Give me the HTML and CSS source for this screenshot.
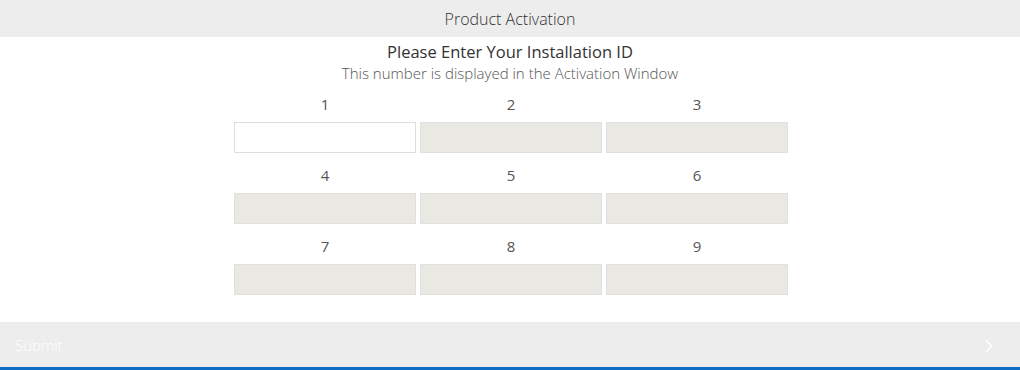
FILE: index.html
```html
<!DOCTYPE html>
<html lang="en">
<head>
    <meta charset="UTF-8">
    <meta name="viewport" content="width=device-width, initial-scale=1.0">
    <title>Product Activation</title>
    <link rel="stylesheet" href="styles.css">
</head>
<body>
    <div class="header">Product Activation</div>

    <div class="content">
        <h1>Please Enter Your Installation ID</h1>
        <p class="subtitle">This number is displayed in the Activation Window</p>

        <div class="id-grid">
            <div class="id-cell"><label>1</label><input type="text" class="id-input active"></div>
            <div class="id-cell"><label>2</label><input type="text" class="id-input" disabled></div>
            <div class="id-cell"><label>3</label><input type="text" class="id-input" disabled></div>
            <div class="id-cell"><label>4</label><input type="text" class="id-input" disabled></div>
            <div class="id-cell"><label>5</label><input type="text" class="id-input" disabled></div>
            <div class="id-cell"><label>6</label><input type="text" class="id-input" disabled></div>
            <div class="id-cell"><label>7</label><input type="text" class="id-input" disabled></div>
            <div class="id-cell"><label>8</label><input type="text" class="id-input" disabled></div>
            <div class="id-cell"><label>9</label><input type="text" class="id-input" disabled></div>
        </div>
    </div>

    <div class="footer">
        <span class="submit">Submit</span>
        <svg class="chevron" width="8" height="14" viewBox="0 0 8 14">
            <path d="M1.5 1.5 L6.5 7 L1.5 12.5" fill="none" stroke="white" stroke-width="1.6"/>
        </svg>
    </div>
</body>
</html>
```
FILE: styles.css
```css
body {
    font-family: 'Open Sans', 'Noto Sans', sans-serif;
    margin: 0;
    padding: 0;
    background-color: white;
    color: #444;
    height: 370px;
    display: flex;
    flex-direction: column;
}

.header {
    background-color: #ededed;
    height: 37px;
    line-height: 38px;
    text-align: center;
    font-size: 16px;
    font-weight: 300;
    color: #333;
}

.content {
    flex: 1;
    display: flex;
    flex-direction: column;
    align-items: center;
}

h1 {
    margin: 3px 0 0;
    font-size: 16.5px;
    font-weight: 400;
    line-height: 24px;
    color: #333;
}

.subtitle {
    margin: 0;
    font-size: 15px;
    font-weight: 300;
    line-height: 18px;
    color: #555;
}

.id-grid {
    display: grid;
    grid-template-columns: repeat(3, 182px);
    column-gap: 4px;
    row-gap: 2px;
    margin: 2px 0 0 2px;
}

.id-cell {
    display: flex;
    flex-direction: column;
    align-items: center;
}

.id-cell label {
    font-size: 15px;
    line-height: 36px;
    padding-top: 2px;
    color: #555;
}

.id-input {
    box-sizing: border-box;
    width: 182px;
    height: 31px;
    margin: 0;
    border: 1px solid #e0e0dc;
    background-color: #e9e8e2;
}

.id-input.active {
    background-color: white;
    border-color: #dedede;
}

.footer {
    height: 45px;
    border-bottom: 3px solid #0a6cc2;
    background-color: #ededed;
    display: flex;
    justify-content: space-between;
    align-items: center;
    padding: 0 27px 0 15px;
    color: white;
}

.submit {
    font-size: 15px;
    font-weight: 300;
}

.chevron {
    margin-top: 2px;
}
```
